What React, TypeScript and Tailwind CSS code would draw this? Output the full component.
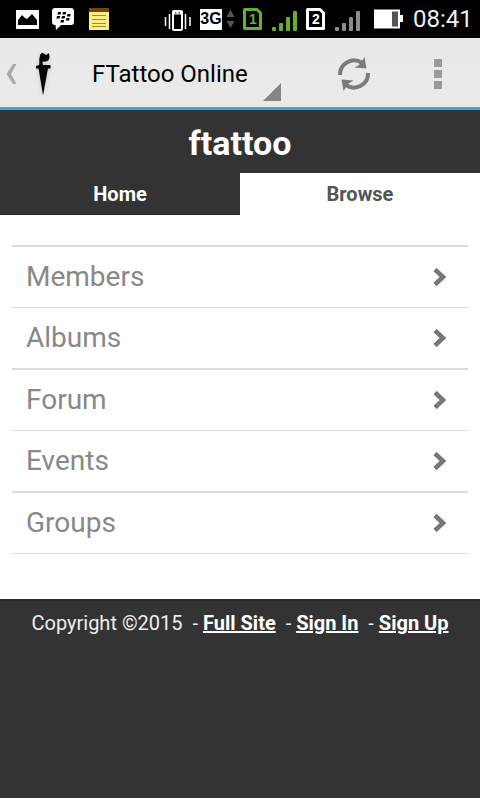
import clsx from "clsx";

const MENU = ["Members", "Albums", "Forum", "Events", "Groups"];

const FOOTER_LINKS = ["Full Site", "Sign In", "Sign Up"];

function PictureIcon() {
  return (
    <svg width="24" height="22" viewBox="0 0 24 22">
      <rect x="0" y="2" width="23" height="19" fill="#fff" />
      <path d="M2 17V12L6 7L9 10L11 11L16 6L21 12V17Z" fill="#000" />
    </svg>
  );
}

function MessengerIcon() {
  return (
    <svg width="24" height="22" viewBox="0 0 24 22">
      <path d="M3 0H19Q22 0 22 3V14Q22 17 19 17H9L4 22L3.500 17H3Q0 17 0 14V3Q0 0 3 0Z" fill="#fff" />
      <path
        d="M6 4h3.200l-.6 2.600H5.400zM11 4h3.200l-.6 2.600h-3.200zM5 8h3.200l-.6 2.600H4.400zM10 8h3.200l-.6 2.600H9.400zM15.500 6h3.200l-.6 2.600h-3.200zM14.500 10h3.200l-.6 2.600h-3.200zM9 12h3.200l-.6 2.400H8.400z"
        fill="#000"
      />
    </svg>
  );
}

function NoteIcon() {
  return (
    <svg width="22" height="22" viewBox="0 0 22 22">
      <rect x="1" y="0" width="20" height="22" fill="#fbee84" />
      <rect x="1" y="0" width="20" height="4" fill="#71440f" />
      <path d="M4 7.500H18M4 11.500H18M4 15.500H18M4 18.500H18" stroke="#9c8c3a" />
    </svg>
  );
}

function VibrateIcon() {
  return (
    <svg width="28" height="24" viewBox="0 0 28 24" fill="none" stroke="#fff">
      <rect x="9" y="4" width="9" height="19" rx="1" strokeWidth="2" />
      <path d="M9 6H18" strokeWidth="3" />
      <path d="M11 6H12.500M14.500 6H16" stroke="#000" />
      <path d="M5.500 7V22M21.500 7V22" strokeWidth="1.500" />
      <path d="M1.500 10V19M26 10V19" strokeWidth="1.500" />
    </svg>
  );
}

function DataArrows() {
  return (
    <svg width="9" height="20" viewBox="0 0 9 20" fill="#555">
      <path d="M4.500 0.500L8.500 8H0.500ZM4.500 19L8.500 12H0.500Z" />
    </svg>
  );
}

function SimCard({ slot, active }: { slot: number; active: boolean }) {
  return (
    <span className={clsx("relative flex h-6 w-5 items-center justify-center", active ? "text-[#62b22c]" : "text-white")}>
      <svg className="absolute inset-0" width="20" height="24" viewBox="0 0 20 24">
        <path d="M1.500 2.500H14L17.500 6V21.500H1.500Z" fill="none" stroke="currentColor" strokeWidth="3" strokeLinejoin="round" />
      </svg>
      <span className="relative font-['Liberation_Sans'] text-sm font-bold">{slot}</span>
    </span>
  );
}

function Signal({ active }: { active: boolean }) {
  return (
    <svg width="27" height="24" viewBox="0 0 27 24" className={active ? "text-[#62b22c]" : "text-[#8c8c8c]"} fill="currentColor">
      <rect x="1" y="20" width="4" height="4" rx="1" />
      <rect x="8" y="16" width="4" height="8" rx="1" />
      <rect x="15" y="10" width="4" height="14" rx="1" />
      <rect x="22" y="4" width="4" height="20" rx="1" />
    </svg>
  );
}

function Battery() {
  return (
    <svg width="36" height="20" viewBox="0 0 36 20">
      <path d="M5 0.500H31V6H34V13H31V19.500H5Z" fill="#fff" />
      <rect x="23" y="2.500" width="6" height="15" fill="#555" />
    </svg>
  );
}

function StatusBar() {
  return (
    <div className="flex h-[38px] items-center justify-between bg-black pr-[10px] pl-4">
      <div className="flex items-center gap-3">
        <PictureIcon />
        <MessengerIcon />
        <NoteIcon />
      </div>
      <div className="flex items-center gap-2">
        <VibrateIcon />
        <div className="flex items-center gap-1">
          <span className="flex h-[21px] w-[22px] items-center justify-center bg-white font-['Liberation_Sans'] text-base font-bold text-black">3G</span>
          <DataArrows />
        </div>
        <SimCard slot={1} active />
        <Signal active />
        <SimCard slot={2} active={false} />
        <Signal active={false} />
        <Battery />
        <span className="w-[57px] text-2xl text-[#eee]">08:41</span>
      </div>
    </div>
  );
}

function DaggerLogo() {
  return (
    <svg width="18" height="46" viewBox="0 0 18 46" className="drop-shadow-sm" fill="#050505">
      <path d="M5 5C5 2 8 1 9.500 3C10.500 4.500 12 4 13.500 2C15.500 5 14.500 10 11 10.500C8.500 10.500 7.500 10 7.500 12L8 14H15.500V17.500H13L12.500 20L8 44.500L4 20L3.500 17.500H1V15L4 14C5 12.500 3.500 9.500 5 5Z" />
    </svg>
  );
}

function RefreshIcon() {
  return (
    <svg width="36" height="36" viewBox="0 0 36 36">
      <g fill="none" stroke="#7b7b7b" strokeWidth="4">
        <path d="M4 19A14 14 0 0 1 26 7" />
        <path d="M32 17A14 14 0 0 1 10 29" />
      </g>
      <path d="M28.500 1L30.500 12.500L18.500 11.500L23.500 8.500ZM7.500 35L5.500 23.500L17.500 24.500L12.500 27.500Z" fill="#7b7b7b" />
    </svg>
  );
}

function ActionBar() {
  return (
    <div className="flex h-[72px] items-center border-b-3 border-[#4aa5c8] bg-linear-to-b from-[#e9e9e9] to-[#eaeaea] pt-[3px] pl-[5px]">
      <button aria-label="Back" className="flex items-center gap-[18px]">
        <svg width="12" height="24" viewBox="0 0 12 24" fill="#a9a9a9">
          <path d="M8 2H11.500L6 12L11.500 22H8L1.500 12Z" />
        </svg>
        <DaggerLogo />
      </button>
      <button className="ml-[39px] flex h-full items-center text-2xl text-black">
        FTattoo Online
        <svg width="18" height="18" viewBox="0 0 18 18" className="mb-1.5 ml-[15px] self-end" fill="#858585">
          <path d="M18 0V18H0Z" />
        </svg>
      </button>
      <button aria-label="Refresh" className="mr-[62px] ml-auto">
        <RefreshIcon />
      </button>
      <button aria-label="More options" className="mr-[38px] flex flex-col gap-[3px]">
        <span className="size-2 bg-[#999]" />
        <span className="size-2 bg-[#999]" />
        <span className="size-2 bg-[#999]" />
      </button>
    </div>
  );
}

export default function App() {
  return (
    <div className="min-h-screen bg-white font-[Roboto,sans-serif]">
      <StatusBar />
      <ActionBar />

      <header className="border-t-2 border-[#173f49] bg-[#333] text-center">
        <h1 className="h-[61px] text-[34px] leading-[63px] font-bold text-white">ftattoo</h1>
        <nav className="grid h-[42px] grid-cols-2 text-xl font-bold">
          <a href="#home" className="flex items-center justify-center border-b border-[#222] text-white">Home</a>
          <a href="#browse" className="flex items-center justify-center bg-white text-[#555]">Browse</a>
        </nav>
      </header>

      <main className="px-3 pt-[30px] pb-[45px]">
        <ul className="border-t-2 border-[#dcdcdc]">
          {MENU.map((item) => (
            <li key={item} className="border-[#dcdcdc] odd:border-b even:border-b-2">
              <a href={`#${item.toLowerCase()}`} className="flex h-[60px] items-center justify-between pr-5 pl-[14px] text-[28px] leading-[58px] text-[#888]">
                {item}
                <svg width="16" height="20" viewBox="0 0 16 20" fill="none" stroke="#777" strokeWidth="4.500">
                  <path d="M3 2.500L11 10L3 17.500" />
                </svg>
              </a>
            </li>
          ))}
        </ul>
      </main>

      {/* Footer */}
      <footer className="h-[199px] border-t-2 border-[#2a2a2a] bg-[#333] pt-2 text-center text-xl text-[#eee]">
        Copyright ©2015
        {FOOTER_LINKS.map((label) => (
          <span key={label}>
            {" "}&nbsp;-{" "}
            <a href="#" className="font-bold text-white underline">{label}</a>
          </span>
        ))}
      </footer>
    </div>
  );
}
